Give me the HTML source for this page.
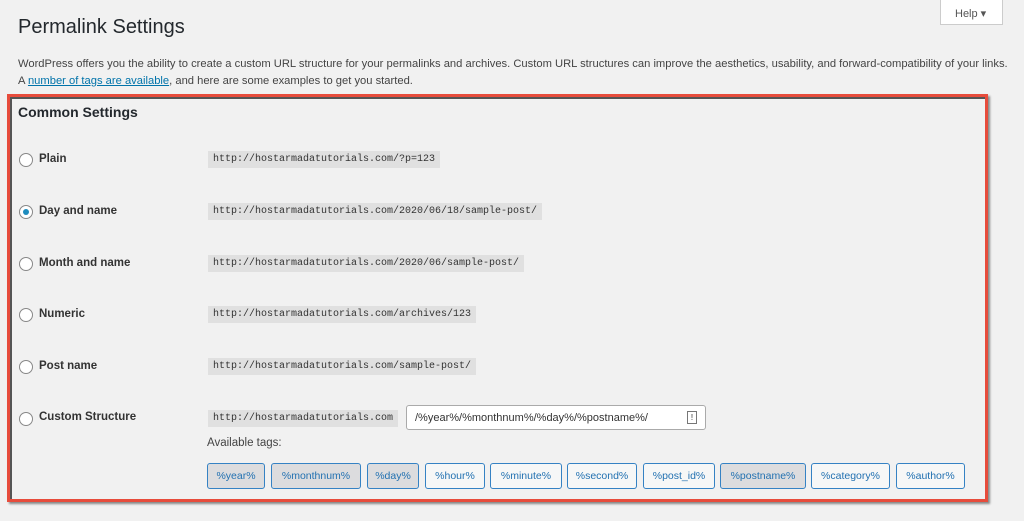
<!DOCTYPE html>
<html><head><style>
body{margin:0;width:1024px;height:521px;background:#f1f1f1;font-family:"Liberation Sans",sans-serif;color:#23282d;position:relative;overflow:hidden}
.a{position:absolute;white-space:nowrap}
h1{position:absolute;left:18px;top:16px;margin:0;font-size:20px;font-weight:400;color:#23282d}
.p{font-size:11.2px;color:#444}
.help{position:absolute;left:940px;top:0;width:63px;height:25px;background:#fff;border:1px solid #ccc;border-top:none;font-size:11px;color:#555;box-sizing:border-box;padding:7px 0 0 14px}
.box{position:absolute;left:7px;top:94px;width:975px;height:402px;border:3px solid #e74c3c;box-shadow:inset 2px 2px 0 #555,2px 2px 2px #888}
.r{position:absolute;left:19px;width:12px;height:12px;border:1px solid #888;border-radius:50%;background:#fff}
.r.on::after{content:"";position:absolute;left:3px;top:3px;width:6px;height:6px;border-radius:50%;background:#1e8cbe}
.l{font-size:11.5px;font-weight:bold;color:#333;left:39px}
code{position:absolute;left:208px;background:#e0e0e0;font-family:"Liberation Mono",monospace;font-size:10px;padding:3px 5px;color:#333;white-space:nowrap}
.t{position:absolute;top:463px;height:26px;border:1px solid #3582c4;border-radius:3px;box-sizing:border-box;font-size:10.5px;color:#2271b1;text-align:center;line-height:24px;background:#f6f7f7}
.t.s{background:#dcdcde}
</style></head><body>
<h1>Permalink Settings</h1>
<div class="help">Help ▾</div>
<div class="a p" style="left:18px;top:58px">WordPress offers you the ability to create a custom URL structure for your permalinks and archives. Custom URL structures can improve the aesthetics, usability, and forward-compatibility of your links.</div>
<div class="a p" style="left:18px;top:75px">A <span style="color:#0073aa;text-decoration:underline">number of tags are available</span>, and here are some examples to get you started.</div>
<div class="box"></div>
<div class="a" style="left:18px;top:104px;font-size:14px;font-weight:bold;color:#23282d">Common Settings</div>
<div class="r" style="top:153px"></div><div class="a l" style="top:153px">Plain</div><code style="top:151px">http://hostarmadatutorials.com/?p=123</code>
<div class="r on" style="top:205px"></div><div class="a l" style="top:205px">Day and name</div><code style="top:203px">http://hostarmadatutorials.com/2020/06/18/sample-post/</code>
<div class="r" style="top:257px"></div><div class="a l" style="top:257px">Month and name</div><code style="top:255px">http://hostarmadatutorials.com/2020/06/sample-post/</code>
<div class="r" style="top:308px"></div><div class="a l" style="top:308px">Numeric</div><code style="top:306px">http://hostarmadatutorials.com/archives/123</code>
<div class="r" style="top:360px"></div><div class="a l" style="top:360px">Post name</div><code style="top:358px">http://hostarmadatutorials.com/sample-post/</code>
<div class="r" style="top:412px"></div><div class="a l" style="top:411px">Custom Structure</div><code style="top:410px">http://hostarmadatutorials.com</code>
<div class="a" style="left:406px;top:405px;width:300px;height:25px;background:#fff;border:1px solid #aaa;border-radius:3px;box-sizing:border-box;font-size:11px;padding:6px 8px;color:#333">/%year%/%monthnum%/%day%/%postname%/<span style="position:absolute;right:8px;top:5px;width:8px;height:11px;border:1px solid #777;font-size:8px;line-height:11px;text-align:center">!</span></div>
<div class="a" style="left:207px;top:437px;font-size:11.5px;color:#444">Available tags:</div>
<div class="t s" style="left:207px;width:58px">%year%</div>
<div class="t s" style="left:271px;width:90px">%monthnum%</div>
<div class="t s" style="left:367px;width:52px">%day%</div>
<div class="t" style="left:425px;width:60px">%hour%</div>
<div class="t" style="left:490px;width:72px">%minute%</div>
<div class="t" style="left:567px;width:70px">%second%</div>
<div class="t" style="left:643px;width:72px">%post_id%</div>
<div class="t s" style="left:720px;width:86px">%postname%</div>
<div class="t" style="left:811px;width:79px">%category%</div>
<div class="t" style="left:896px;width:69px">%author%</div>
</body></html>
